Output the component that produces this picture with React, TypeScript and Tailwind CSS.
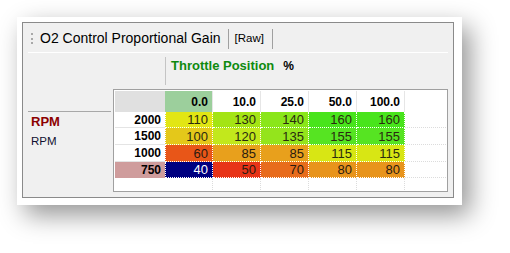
const headers = ['0.0', '10.0', '25.0', '50.0', '100.0'];

type Row = { rpm: string; head: string; cells: [string, string, string][] };

// value, background class, text class
const rows: Row[] = [
  {
    rpm: '2000',
    head: 'bg-white',
    cells: [
      ['110', 'bg-[#e2e614]', 'text-[#2a2a10]'],
      ['130', 'bg-[#a4e414]', 'text-[#2a2a10]'],
      ['140', 'bg-[#8ae61a]', 'text-[#2a2a10]'],
      ['160', 'bg-[#48e41c]', 'text-[#2a2a10]'],
      ['160', 'bg-[#48e41c]', 'text-[#2a2a10]'],
    ],
  },
  {
    rpm: '1500',
    head: 'bg-white',
    cells: [
      ['100', 'bg-[#e4c81a]', 'text-[#2a2a10]'],
      ['120', 'bg-[#c2e81c]', 'text-[#2a2a10]'],
      ['135', 'bg-[#94e41c]', 'text-[#2a2a10]'],
      ['155', 'bg-[#56e422]', 'text-[#2a2a10]'],
      ['155', 'bg-[#56e422]', 'text-[#2a2a10]'],
    ],
  },
  {
    rpm: '1000',
    head: 'bg-white',
    cells: [
      ['60', 'bg-[#e85618]', 'text-[#2a1a10]'],
      ['85', 'bg-[#e8a01c]', 'text-[#2a1a10]'],
      ['85', 'bg-[#e8a01c]', 'text-[#2a1a10]'],
      ['115', 'bg-[#d8e614]', 'text-[#2a2a10]'],
      ['115', 'bg-[#d8e614]', 'text-[#2a2a10]'],
    ],
  },
  {
    rpm: '750',
    head: 'bg-[#cf9c9c]',
    cells: [
      ['40', 'bg-[#000080]', 'text-white'],
      ['50', 'bg-[#e83418]', 'text-[#2a1a10]'],
      ['70', 'bg-[#e86c1c]', 'text-[#2a1a10]'],
      ['80', 'bg-[#e8941c]', 'text-[#2a1a10]'],
      ['80', 'bg-[#e8941c]', 'text-[#2a1a10]'],
    ],
  },
];

const rowHeights = ['h-[16px]', 'h-[17px]', 'h-[17px]', 'h-[16px]'];

function TableGrid() {
  return (
    <div className="w-[335px] h-[103px] border border-[#a0a0a0] bg-white p-px flex flex-col">
      {/* column headers */}
      <div className="flex h-[21px] shrink-0">
        <div className="w-[50px] bg-[#e0e0e0]" />
        {headers.map((h, i) => (
          <div
            key={h}
            className={`w-[48px] flex items-center justify-end pr-[4px] pt-px font-bold text-[12px] text-black border-r border-[#e6e6e6] ${
              i === 0 ? 'bg-[#9ccf9c]' : 'bg-white'
            }`}
          >
            {h}
          </div>
        ))}
        <div className="flex-1" />
      </div>

      {rows.map((r, ri) => (
        <div key={r.rpm} className={`flex shrink-0 ${rowHeights[ri]}`}>
          <div
            className={`w-[50px] flex items-center justify-end pr-[4px] font-bold text-[12px] text-black ${r.head} ${
              ri < rows.length - 1 ? 'border-b border-[#e4e4e4]' : ''
            }`}
          >
            {r.rpm}
          </div>
          {r.cells.map(([v, bg, fg], ci) => (
            <div
              key={ci}
              className={`w-[48px] flex items-center justify-end pr-[4px] text-[13px] leading-none border-r border-b border-dotted border-white ${bg} ${fg} ${
                ci === 0 ? 'border-l' : ''
              }`}
            >
              {v}
            </div>
          ))}
          <div className="flex-1 border-b border-dotted border-[#dcdcdc]" />
        </div>
      ))}

      {/* trailing empty row */}
      <div className="flex flex-1">
        <div className="w-[50px]" />
        {headers.map((h) => (
          <div key={h} className="w-[48px] border-r border-dotted border-[#dcdcdc]" />
        ))}
        <div className="flex-1" />
      </div>
    </div>
  );
}

export default function App() {
  return (
    <div className="w-[510px] h-[253px] bg-white pl-[17px] pt-[17px] font-['Liberation_Sans',Arial,sans-serif]">
      <div className="w-[445px] h-[188px] bg-white pl-[5px] pt-[5px] shadow-[8px_10px_24px_rgba(0,0,0,0.42)]">
        <div className="w-[432px] h-[176px] border border-[#8a8a8a] bg-[#f0f0f0] flex flex-col">
          {/* toolbar */}
          <div className="h-[29px] flex items-center pl-[8px] pt-[2px] shrink-0">
            <div className="w-[3px] h-[11px] border-l-2 border-dotted border-[#a8a8a8]" />
            <span className="ml-[6px] text-[14px] text-black whitespace-nowrap">
              O2 Control Proportional Gain
            </span>
            <div className="ml-[7px] w-px h-[20px] bg-[#a0a0a0]" />
            <span className="ml-[6px] text-[11.5px] text-black">[Raw]</span>
            <div className="ml-[8px] w-px h-[20px] bg-[#a0a0a0]" />
          </div>
          <div className="mx-[5px] h-px bg-white shrink-0" />

          {/* x axis label */}
          <div className="h-[36px] flex shrink-0">
            <div className="w-[142px]" />
            <div className="mt-[4px] w-px h-[28px] bg-[#c4c4c4]" />
            <div className="ml-[5px] pt-[3px] flex items-baseline">
              <span className="text-[13px] font-bold text-[#0e8a0e]">Throttle Position</span>
              <span className="ml-[9px] text-[12px] font-bold text-black">%</span>
            </div>
          </div>

          {/* y axis label + table */}
          <div className="flex">
            <div className="w-[90px] pl-[5px] pt-[22px]">
              <div className="w-[83px] h-px bg-[#a8a8a8]" />
              <div className="pl-[3px] pt-[2px] text-[13px] font-bold text-[#8c0000] leading-[15px]">RPM</div>
              <div className="pl-[3px] pt-[5px] text-[11.5px] text-[#101030] leading-[14px]">RPM</div>
            </div>
            <TableGrid />
          </div>
        </div>
      </div>
    </div>
  );
}
